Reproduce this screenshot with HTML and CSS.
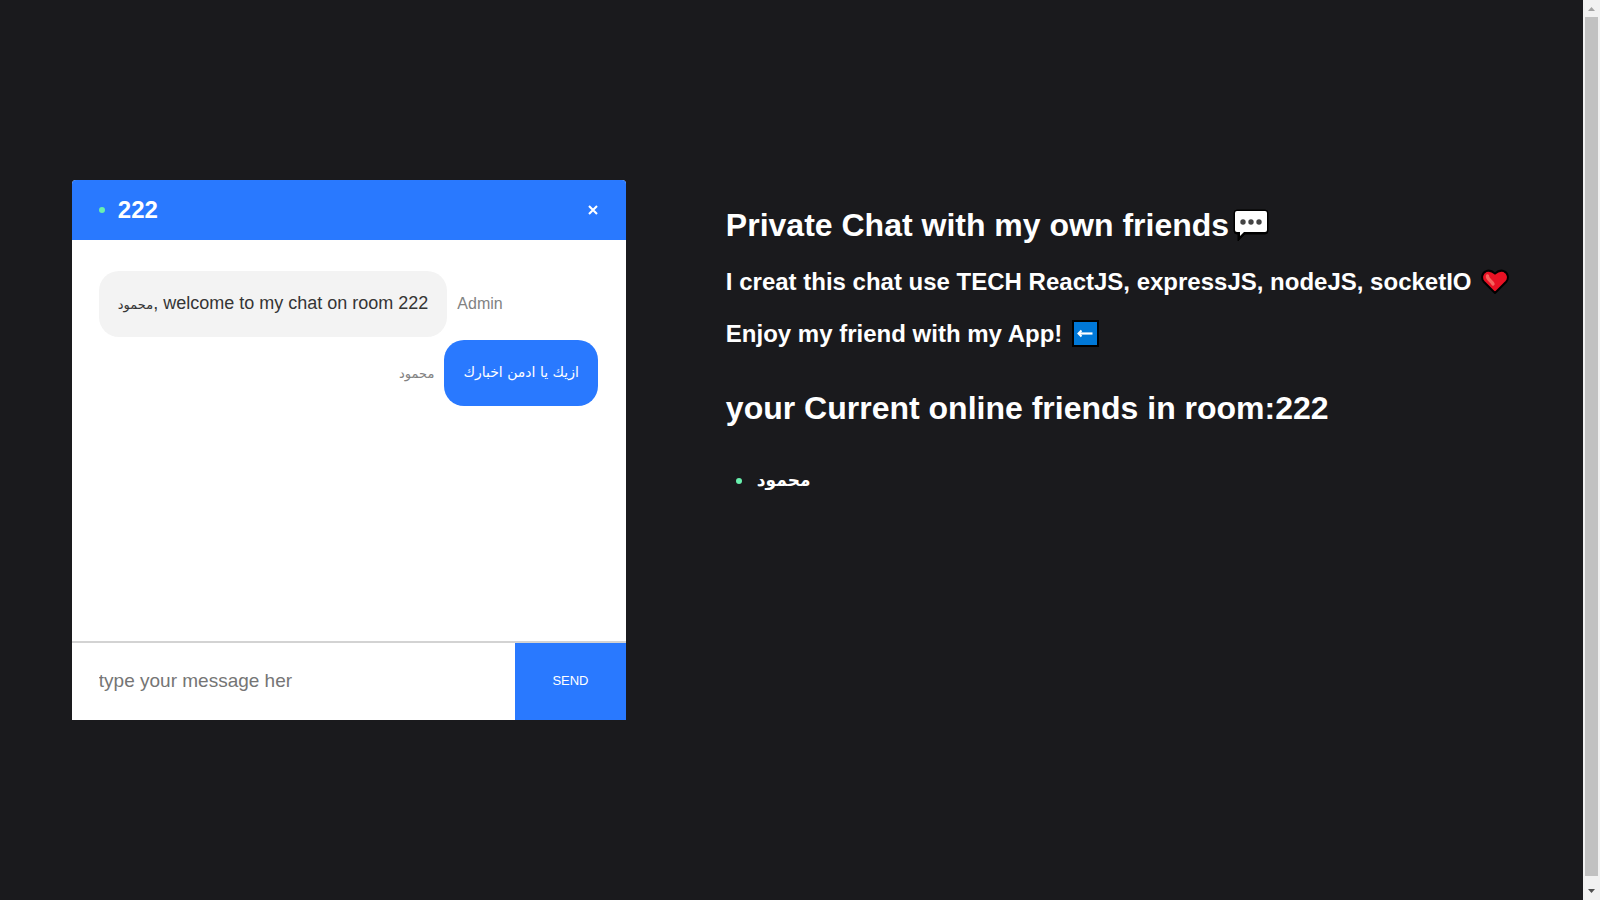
FILE: index.html
```html
<!DOCTYPE html>
<html lang="en">
<head>
<meta charset="utf-8">
<title>Chat room 222</title>
<link rel="stylesheet" href="styles.css">
</head>
<body>
<div class="app">
  <main class="page">
    <section class="chat">
      <header class="chat-header">
        <span class="dot"></span>
        <h3 class="room">222</h3>
        <a class="close" href="#" aria-label="Leave the room">
          <svg width="10" height="10" viewBox="0 0 10 10"><path d="M1 1L9 9M9 1L1 9" stroke="#fff" stroke-width="2.1"/></svg>
        </a>
      </header>
      <div class="messages">
        <div class="message">
          <p class="bubble"><span class="arabic-small">محمود</span>, welcome to my chat on room 222</p>
          <span class="sender">Admin</span>
        </div>
        <div class="message own">
          <span class="sender arabic-name">محمود</span>
          <p class="bubble arabic" dir="rtl">ازيك يا ادمن اخبارك</p>
        </div>
      </div>
      <form class="composer">
        <input class="field" type="text" aria-label="Message" placeholder="type your message her">
        <button class="send" type="button">SEND</button>
      </form>
    </section>
    <section class="info">
      <h1 class="title">Private Chat with my own friends<svg class="speech" width="36" height="34" viewBox="0 0 36 34"><path d="M4 1H32Q35 1 35 4V22Q35 25 32 25H12L5 32V25H4Q1 25 1 22V4Q1 1 4 1Z" fill="#000" stroke="#000" stroke-width="1"/><path d="M4 2H32Q34 2 34 4V21Q34 23 32 23H11L7 27V23H4Q2 23 2 21V4Q2 2 4 2Z" fill="#fff"/><g fill="#444"><circle cx="10" cy="13" r="2.700"/><circle cx="18" cy="13" r="2.700"/><circle cx="26" cy="13" r="2.700"/></g></svg></h1>
      <h2 class="subtitle">I creat this chat use TECH ReactJS, expressJS, nodeJS, socketIO <svg class="emoji" width="28" height="26" viewBox="0 0 28 26"><path d="M14 24L2.800 12.700C-.2 9.500 1 3.700 5 2.200Q9.500 .3 14 4.600Q18.500 .3 23 2.200C27 3.700 28.200 9.500 25.200 12.700Z" fill="#e81224" stroke="#000" stroke-width="2" stroke-linejoin="round"/><path d="M6.500 7C6 10 10.500 12 12 15" fill="none" stroke="#f4655e" stroke-width="3.400" stroke-linecap="round"/></svg></h2>
      <h2 class="subtitle">Enjoy my friend with my App! <svg class="emoji" width="27" height="27" viewBox="0 0 27 27"><path d="M1 1H26V26H1Z" fill="#0078d7" stroke="#000" stroke-width="2"/><path d="M7 13.500H20.500" stroke="#fff" stroke-width="2.200"/><path d="M9.500 10.500L6.500 13.500L9.500 16.500" fill="none" stroke="#fff" stroke-width="2"/></svg></h2>
      <h1 class="title online">your Current online friends in room:222</h1>
      <ul class="friends">
        <li class="friend"><span class="dot"></span><span class="friend-name">محمود</span></li>
      </ul>
    </section>
  </main>
  <div class="scrollbar" aria-hidden="true">
    <svg class="arrow" width="17" height="17" viewBox="0 0 17 17"><path d="M5 11L8.500 7L12 11Z" fill="#a3a3a3"/></svg>
    <div class="thumb"></div>
    <svg class="arrow" width="17" height="24" viewBox="0 0 17 24"><path d="M5 13L8.500 17L12 13Z" fill="#505050"/></svg>
  </div>
</div>
</body>
</html>
```
FILE: styles.css
```css
* { box-sizing: border-box; }

body {
  margin: 0;
  background: #1a1a1d;
  color: #fff;
  font-family: "Liberation Sans", Arial, sans-serif;
}

h1, h2, h3, p, ul { margin: 0; padding: 0; }

.app { display: flex; min-height: 100vh; }

.page {
  flex: 1;
  display: flex;
  justify-content: center;
  align-items: center;
}

.chat {
  width: 35%;
  height: 60vh;
  display: flex;
  flex-direction: column;
  background: #fff;
  border-radius: 4px 4px 0 0;
  overflow: hidden;
}

.chat-header {
  display: flex;
  align-items: center;
  height: 60px;
  padding: 0 28px 0 27px;
  background: #2979ff;
}

.dot {
  width: 6px;
  height: 6px;
  border-radius: 50%;
  background: #69f0ae;
}

.room { margin-left: 13px; font-size: 24px; line-height: 28px; }

.close { display: flex; margin-left: auto; }

.messages { flex: 1; padding: 31px 28px 31px 27px; }

.message { display: flex; align-items: center; gap: 10px; margin-bottom: 3px; }

.own { justify-content: flex-end; }

.bubble {
  height: 66px;
  padding: 0 19px;
  border-radius: 20px;
  background: #f3f3f3;
  color: #353535;
  font-size: 18px;
  line-height: 64px;
  white-space: nowrap;
}

.own .bubble { background: #2979ff; color: #fff; }

.sender { color: #828282; font-size: 16px; }

.arabic, .arabic-small, .arabic-name, .friend-name { font-family: "DejaVu Sans", sans-serif; }

.arabic { font-size: 14px; }

.arabic-small, .arabic-name { font-size: 13px; }

.composer { display: flex; height: 79px; border-top: 2px solid #d3d3d3; }

.field {
  flex: 1;
  min-width: 0;
  padding: 0 27px 2px;
  border: 0;
  background: #fff;
  font-family: inherit;
  font-size: 19px;
}

.field::placeholder { color: #757575; }

.send {
  width: 20%;
  padding: 0 0 2px;
  border: 0;
  background: #2979ff;
  color: #fff;
  font-family: inherit;
  font-size: 13px;
}

.info {
  height: 60vh;
  margin-left: 100px;
  padding-top: 27px;
  padding-right: 2px;
  white-space: nowrap;
}

.title { font-size: 32px; line-height: 36px; }

.speech { margin-left: 4px; margin-bottom: -7px; vertical-align: baseline; }

.subtitle { margin-top: 25px; font-size: 24px; line-height: 27px; }

.emoji { margin: -6px 0 -5px 3px; vertical-align: baseline; }

.online { margin-top: 43px; }

.friends { margin-top: 41px; padding-left: 10px; list-style: none; }

.friend { display: flex; align-items: center; gap: 15px; }

.friend-name { font-size: 17px; font-weight: 700; line-height: 27px; }

.scrollbar {
  display: flex;
  flex-direction: column;
  width: 17px;
  background: #f1f1f1;
}

.arrow { display: block; }

.thumb { flex: 1; margin: 0 2px; background: #c1c1c1; }
```
